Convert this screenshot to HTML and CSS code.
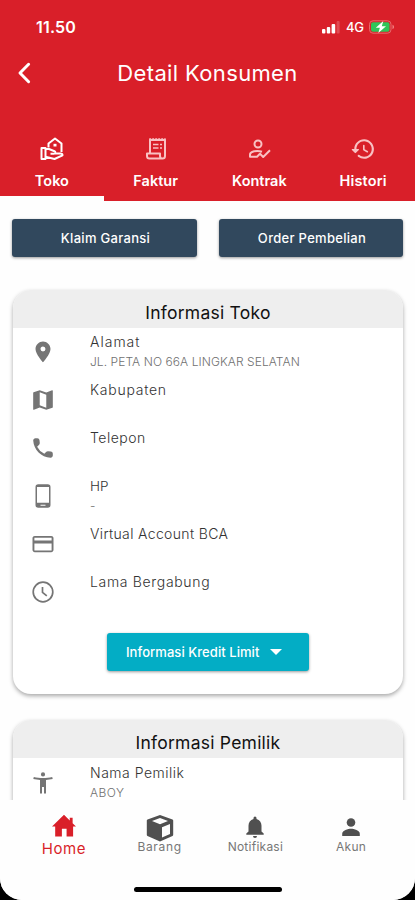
FILE: index.html
```html
<!DOCTYPE html>
<html lang="id">
<head>
<meta charset="utf-8">
<meta name="viewport" content="width=device-width, initial-scale=1">
<title>Detail Konsumen</title>
<link rel="stylesheet" href="styles.css">
</head>
<body>
<div class="screen">
  <header class="top">
    <div class="status">
      <span class="time">11.50</span>
      <div class="signals">
        <svg class="bars" viewBox="0 0 18 14"><rect x="0" y="9" width="3.4" height="4.5" rx="1"/><rect x="4.8" y="7" width="3.4" height="6.5" rx="1"/><rect x="9.6" y="4" width="3.6" height="9.5" rx="1"/><rect x="14.6" y="1" width="3" height="12.5" rx="1" opacity=".2"/></svg>
        <span class="net">4G</span>
        <svg class="battery" viewBox="0 0 26 14"><rect x=".5" y=".8" width="21.5" height="12.4" rx="3.5" fill="none" stroke="#e8696c"/><rect x="2" y="2.3" width="18.5" height="9.4" rx="2" fill="#2fc559"/><path d="M23.5 4.8c2 .7 2 3.7 0 4.4z" fill="#f07f80"/><path d="M14.3 1 6.8 7.8h4.1L9.3 13 17 6.2h-4.2z" fill="#fff"/></svg>
      </div>
    </div>
    <div class="titlebar">
      <svg class="back" viewBox="0 0 14 22"><path d="M11.6 2.3 3 11l8.600 8.700"/></svg>
      <h1>Detail Konsumen</h1>
    </div>
    <nav class="tabs">
      <a class="tab active"><svg viewBox="0 0 24 24"><path class="line" d="M8.500 10.500V6.500L15 1.500l6.500 5V15"/><path d="M13.500 6.800h3v2.700h-3z"/><path class="line" d="M1.500 11h4v11h-4zM5.500 12H9l5.500 2.200q1 .5.800 1.600-.3 1-1.500 1H10.500M15.300 16.500h5.200q2 0 2 1.800L14.500 22l-9-2.200"/></svg><span>Toko</span></a>
      <a class="tab faktur"><svg viewBox="0 0 24 24"><path class="line" d="M6 16V3h15v16q0 2.500-2.500 2.500H5.500Q3 21.500 3 19v-2.500h13V19q0 2.500 2.500 2.500"/><path class="thin" d="M9 7.500h5.500m1.500 0h2M9 11h5.500m1.500 0h2"/><path class="dots" d="M5.200 2.400h16.500"/></svg><span>Faktur</span></a>
      <a class="tab kontrak"><svg viewBox="0 0 24 24"><circle class="line" cx="11" cy="7" r="3.500"/><path class="line" d="M15 14.800c-5-2-12-.2-12 2.800v2.200h7l3-3M12.500 16.300l3.700 3.700 6.800-6.800"/></svg><span>Kontrak</span></a>
      <a class="tab histori"><svg viewBox="1 1 22 22"><path d="M13.260 3C8.170 2.860 4 6.950 4 12H2.210c-.45 0-.67.540-.35.850l2.790 2.800c.2.200.510.200.710 0l2.790-2.800c.31-.31.090-.85-.36-.85H6c0-3.900 3.180-7.050 7.100-7 3.720.050 6.850 3.180 6.900 6.900.050 3.910-3.100 7.100-7 7.100-1.610 0-3.100-.55-4.280-1.480a.994.994 0 0 0-1.320.080c-.42.420-.39 1.130.080 1.490A8.858 8.858 0 0 0 13 21c5.050 0 9.140-4.170 9-9.260-.13-4.690-4.050-8.610-8.740-8.740zM12.750 8c-.41 0-.75.340-.75.750v3.680c0 .350.190.680.490.860l3.120 1.850a.74.74 0 1 0 .76-1.270l-2.880-1.710v-3.420a.74.74 0 0 0-.74-.74z"/></svg><span>Histori</span></a>
    </nav>
  </header>
  <main class="content">
    <div class="actions"><button>Klaim Garansi</button><button>Order Pembelian</button></div>
    <section class="card">
      <h2>Informasi Toko</h2>
      <ul>
        <li><svg viewBox="0 0 24 24"><path d="M12 1.500C8.130 1.500 4.500 4.800 4.500 9c0 5.250 7.500 13.300 7.500 13.300S19.500 14.250 19.500 9c0-4.200-3.630-7.500-7.500-7.500zm0 10a2.500 2.500 0 0 1 0-5 2.500 2.500 0 0 1 0 5z"/></svg><div><b class="alamat">Alamat</b><small class="address">JL. PETA NO 66A LINGKAR SELATAN</small></div></li>
        <li><svg viewBox="1 1 22 22"><path d="m20.500 3-.16.030L15 5.100 9 3 3.360 4.900c-.21.070-.36.250-.36.480V20.500c0 .280.220.500.500.500l.16-.03L9 18.900l6 2.100 5.640-1.900c.21-.07.360-.25.360-.48V3.500c0-.28-.22-.5-.5-.5zM15 19l-6-2.110V5l6 2.110V19z"/></svg><div><b class="kabupaten">Kabupaten</b></div></li>
        <li><svg viewBox="1 1 22 22"><path d="m19.230 15.260-2.540-.29a1.990 1.990 0 0 0-1.640.57l-1.840 1.840a15.045 15.045 0 0 1-6.590-6.590l1.850-1.850c.430-.43.640-1.030.570-1.640l-.29-2.520A2.001 2.001 0 0 0 6.760 3H5.030c-1.130 0-2.070.94-2 2.070.53 8.540 7.360 15.360 15.890 15.890 1.130.070 2.070-.87 2.070-2v-1.730c.010-1.010-.75-1.860-1.760-1.970z"/></svg><div><b>Telepon</b></div></li>
        <li><svg viewBox="0 0 24 24"><path fill-rule="evenodd" d="M16.800.3H7.200A2.700 2.700 0 0 0 4.500 3v18a2.700 2.700 0 0 0 2.700 2.700h9.600a2.700 2.700 0 0 0 2.700-2.700V3A2.700 2.700 0 0 0 16.800.3zM14.500 21.800h-5v-1h5zM18 18.800H6V3h12z"/></svg><div><b class="hp">HP</b><small>-</small></div></li>
        <li><svg viewBox="0 0 24 24"><path d="M20.200 4H3.800C2.600 4 1.500 4.890 1.500 6v12c0 1.110 1.100 2.300 2.300 2.300h16.400c1.200 0 2.300-1.190 2.300-2.300V6c0-1.110-1.100-2-2.300-2zm.4 14.500H3.400V11.500h17.200zm0-10H3.400V5.800h17.200z"/></svg><div><b class="virtual">Virtual Account BCA</b></div></li>
        <li><svg class="clock" viewBox="0 0 24 24"><circle cx="12" cy="12" r="9.800"/><path d="M11.500 7v5.400l4.300 3.400"/></svg><div><b class="lama">Lama Bergabung</b></div></li>
      </ul>
      <button class="credit"><span>Informasi Kredit Limit</span><i></i></button>
    </section>
    <section class="card owner">
      <h2>Informasi Pemilik</h2>
      <ul><li><svg viewBox="0 0 24 24"><path d="M21.200 6c-2.800.7-6.200 1-9.200 1s-6.400-.3-9.200-1l-.5 2c2.100.5 4.700.830 6.700 1v13.500h2v-6.500h2v6.500h2V9c2-.17 4.600-.5 6.700-1zM12 5.500a2.100 2.100 0 1 0 0-4.200 2.100 2.100 0 0 0 0 4.200z"/></svg><div><b>Nama Pemilik</b><small class="aboy">ABOY</small></div></li></ul>
    </section>
  </main>
  <footer>
    <nav class="bottom">
      <a class="home"><svg viewBox="0 0 26 24"><path d="M13 .8.500 13h3.300v10.500h7v-8h4.900v8h6.800V13h3L22 9.700V4h-3v2.700z"/></svg><span>Home</span></a>
      <a class="goods"><svg viewBox="0 0 28 28"><path fill-rule="evenodd" d="M14 1 26.500 5.500q.7.300.7 1v14.200q0 .9-.7 1.300L14 27.500 1.500 22q-.7-.4-.7-1.300V6.500q0-.7.700-1zM14 4 6 7l8 3.300L22 7zM16 13.300v10.200l8-3.500V10z"/></svg><span>Barang</span></a>
      <a class="bell"><svg viewBox="0 0 24 24"><path d="M12 23a2 2 0 0 0 2-2h-4a2 2 0 0 0 2 2zm6.500-6.500v-5.700c0-3.300-1.750-6.100-5-6.800V3a1.500 1.500 0 0 0-3 0v1c-3.240.750-5 3.500-5 6.800v5.700l-2.200 2v1.200h17.400v-1.200z"/></svg><span>Notifikasi</span></a>
      <a class="user"><svg viewBox="0 0 24 24"><circle cx="12" cy="7.500" r="4.300"/><path d="M3.200 21v-2.300c0-3.200 5.800-4.900 8.800-4.900s8.800 1.700 8.800 4.900V21z"/></svg><span>Akun</span></a>
    </nav>
    <div class="handle"></div>
  </footer>
</div>
</body>
</html>
```
FILE: styles.css
```css
* { box-sizing: border-box; }
body { margin: 0; background: #000; font-family: Inter, "Liberation Sans", sans-serif; }
.screen { height: 900px; display: flex; flex-direction: column; overflow: hidden; background: #fefefe; border-radius: 0 0 22px 22px; }
.top { height: 201px; flex: none; background: #d91f29; color: #fff; display: flex; flex-direction: column; }
.status { height: 54px; padding: 0 20px 0 36px; display: flex; align-items: center; justify-content: space-between; }
.time { font-size: 16px; font-weight: 600; letter-spacing: .2px; }
.signals { display: flex; align-items: center; }
.bars { width: 18px; height: 14px; fill: #fff; margin-right: 6px; }
.net { width: 19px; margin-right: 4px; font-size: 13px; font-weight: 500; letter-spacing: -.3px; }
.battery { width: 26px; height: 14px; }
.titlebar { height: 38px; display: grid; grid-template-columns: 48px 1fr 48px; align-items: center; }
.back { width: 14px; height: 22px; margin-left: 17px; fill: none; stroke: #fff; stroke-width: 3; stroke-linecap: round; stroke-linejoin: round; }
h1 { margin: 0; font-size: 22px; line-height: 28px; font-weight: 400; text-align: center; letter-spacing: .35px; }
.tabs { flex: 1; display: grid; grid-template-columns: repeat(4, 1fr); }
.tab { display: flex; flex-direction: column; align-items: center; padding-top: 45px; color: #ffdedf; border-bottom: 5px solid transparent; }
.tab.active { color: #fff; border-color: #fefefe; }
.tab svg { width: 24px; height: 24px; fill: currentColor; opacity: .85; }
.tab.active svg { opacity: 1; }
.tab .line, .tab .thin, .tab .dots { fill: none; stroke: currentColor; stroke-width: 2; stroke-linejoin: round; }
.tab .thin { stroke-width: 1.500; }
.tab .dots { stroke-width: 2.500; stroke-dasharray: 2 1; }
.tab span { margin-top: 10px; line-height: 20px; font-size: 14.500px; font-weight: 600; color: #fff; letter-spacing: 0; }
.tab.histori span { letter-spacing: .2px; }
.content { height: 599px; flex: none; overflow: hidden; padding: 18px 12px 0; }
button { height: 38px; border: 0; border-radius: 3px; padding: 0; font: 500 13px/38px Inter, "Liberation Sans", sans-serif; letter-spacing: .3px; color: #fff; background: #31485d; box-shadow: 0 1px 3px rgba(0,0,0,.4); }
.actions { display: grid; grid-template-columns: 185px 184px; justify-content: space-between; }
.actions button { padding-left: 2px; }
.card { height: 404px; margin: 33px 0 0 1px; width: 390px; border-radius: 18px; overflow: hidden; background: #fff; box-shadow: 0 2px 4px rgba(0,0,0,.34); display: flex; flex-direction: column; }
.card.owner { margin-top: 26px; }
h2 { margin: 0; height: 38px; flex: none; padding-top: 3px; background: #eee; text-align: center; font-size: 17.500px; line-height: 40px; font-weight: 400; color: #111; letter-spacing: .23px; }
ul { list-style: none; margin: 0; padding: 0; }
.owner ul { padding-top: 1px; }
li { height: 48px; display: flex; padding-left: 18px; }
li svg { width: 24px; height: 24px; margin: 12px 35px 0 0; flex: none; fill: #757575; }
li .clock { fill: none; stroke: #757575; stroke-width: 1.700; }
li b, li small { display: block; white-space: nowrap; }
li b { margin-top: 4px; font-size: 14px; line-height: 20px; font-weight: 300; color: #333; letter-spacing: .5px; }
li .alamat { letter-spacing: 1px; }
li .kabupaten { letter-spacing: .75px; }
li .hp { font-size: 13.500px; letter-spacing: 0; }
li .virtual { letter-spacing: .35px; }
li .lama { letter-spacing: .67px; }
li small { margin-top: 1px; font-size: 12px; line-height: 18px; font-weight: 300; color: #707070; letter-spacing: .07px; }
li .aboy { letter-spacing: .5px; }
.credit { margin: 17px 0 0 94px; width: 202px; display: flex; align-items: center; padding-left: 19px; background: #03adc5; letter-spacing: .06px; }
.credit i { margin-left: 11px; border: 6px solid transparent; border-top: 6px solid #fff; border-bottom: 0; }
footer { height: 100px; background: #fefefe; display: flex; flex-direction: column; align-items: center; }
.bottom { height: 87px; width: 100%; padding: 0 16px; display: grid; grid-template-columns: repeat(4, 1fr); }
.bottom a { display: flex; flex-direction: column; align-items: center; padding-top: 14px; color: #777; font-size: 12px; line-height: 16px; font-weight: 400; letter-spacing: .25px; }
.bottom svg { fill: #505050; width: 24px; height: 24px; }
.bottom .home { color: #d91f29; font-size: 15px; letter-spacing: .6px; }
.home svg { width: 26px; height: 23px; fill: #d91f29; margin-bottom: 4px; }
.bottom .goods { letter-spacing: .7px; }
.goods svg { width: 28px; height: 28px; margin-bottom: -3px; }
.bell svg, .user svg { margin: 1px 0 0; }
.handle { width: 148px; height: 5px; border-radius: 3px; background: #000; }
```
